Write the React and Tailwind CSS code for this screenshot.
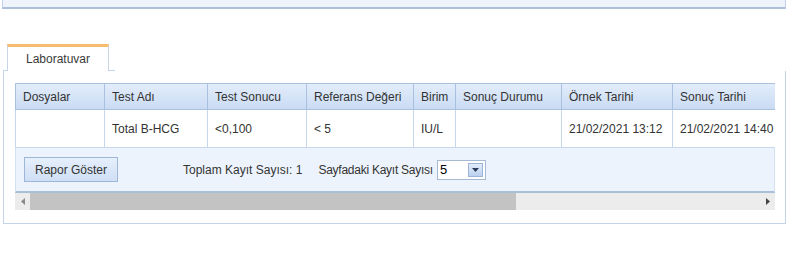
import React from 'react';

const columns = [
  { name: 'Dosyalar', w: 'w-[90px]' },
  { name: 'Test Adı', w: 'w-[103px]' },
  { name: 'Test Sonucu', w: 'w-[99px]' },
  { name: 'Referans Değeri', w: 'w-[107px]' },
  { name: 'Birim', w: 'w-[42px]' },
  { name: 'Sonuç Durumu', w: 'w-[106px]' },
  { name: 'Örnek Tarihi', w: 'w-[111px]' },
  { name: 'Sonuç Tarihi', w: 'w-[112px]' },
];

const row = ['', 'Total B-HCG', '<0,100', '< 5', 'IU/L', '', '21/02/2021 13:12', '21/02/2021 14:40'];

const App = () => {
  return (
    <div className="w-[787px] h-[266px] bg-white overflow-hidden text-[12px] text-[#333]" style={{ fontFamily: '"Liberation Sans", Arial, sans-serif' }}>
      {/* top panel edge */}
      <div className="ml-[2px] mr-[1px] h-[9px] bg-[#eef3fc] border-x border-[#c3d2ea] border-b-2 border-b-[#aebfdb]" />

      <div className="mt-[35px] ml-[3px] mr-[1px]">
        {/* tab strip */}
        <div className="flex items-end h-[27px]">
          <div className="w-[4px] border-b border-[#c3d3e8]" />
          <div className="w-[102px] h-[27px] border-t-[3px] border-t-[#f6bd70] border-x border-x-[#c9d5e6] bg-white flex items-center justify-center text-[#3a3a3a]">
            Laboratuvar
          </div>
          <div className="w-[6px] border-b border-[#c3d3e8]" />
        </div>

        {/* panel body */}
        <div className="border-x border-b border-[#c3d3e8] pl-[11px] pr-[10px] pt-[12px] pb-[13px]">
          <div className="w-[760px] overflow-hidden">
            {/* header */}
            <div className="flex h-[27px] w-max bg-gradient-to-b from-[#e3edfb] to-[#c9dbf3] border-y border-[#a9c0df]">
              {columns.map(c => (
                <div key={c.name} className={`${c.w} shrink-0 border-r border-[#a9c0df] flex items-center pl-[7px] first:border-l`}>
                  {c.name}
                </div>
              ))}
            </div>
            {/* data row */}
            <div className="flex h-[38px] w-max bg-white border-b border-[#c6d6ec]">
              {columns.map((c, i) => (
                <div key={c.name} className={`${c.w} shrink-0 border-r border-[#c6d6ec] flex items-center pl-[7px] first:border-l`}>
                  {row[i]}
                </div>
              ))}
            </div>
            {/* toolbar */}
            <div className="h-[45px] bg-[#edf3fd] border-x border-[#d3e0f2] border-b-2 border-b-[#a9bfd9] flex items-center pl-[8px]">
              <button className="w-[94px] h-[25px] border border-[#9fb7d6] bg-gradient-to-b from-[#e6effc] to-[#cfdff5] text-[#333] text-[12px]">
                Rapor Göster
              </button>
              <span className="ml-[65px]">Toplam Kayıt Sayısı: 1</span>
              <span className="ml-[16px] tracking-[-0.25px]">Sayfadaki Kayıt Sayısı</span>
              <div className="ml-[4px] w-[49px] h-[20px] border border-[#a6b9d4] bg-white flex items-center justify-between pl-[2px] pr-[2px]">
                <span className="text-[#000] text-[13px]">5</span>
                <div className="w-[15px] h-[14px] bg-gradient-to-b from-[#e2ecfa] to-[#bcd1ef] border border-[#9db4d6] flex items-center justify-center">
                  <svg width="7" height="4" viewBox="0 0 7 4"><path d="M0 0h7L3.5 4z" fill="#2b3f5c" /></svg>
                </div>
              </div>
            </div>
            {/* horizontal scrollbar */}
            <div className="h-[17px] bg-[#ececec] flex items-center">
              <div className="w-[15px] flex items-center justify-center">
                <svg width="4" height="7" viewBox="0 0 4 7"><path d="M4 0v7L0 3.5z" fill="#8a8a8a" /></svg>
              </div>
              <div className="w-[486px] h-[17px] bg-[#c3c3c3]" />
              <div className="flex-1" />
              <div className="w-[15px] flex items-center justify-center">
                <svg width="4" height="7" viewBox="0 0 4 7"><path d="M0 0v7L4 3.5z" fill="#444" /></svg>
              </div>
            </div>
          </div>
        </div>
      </div>
    </div>
  );
};

export default App;
